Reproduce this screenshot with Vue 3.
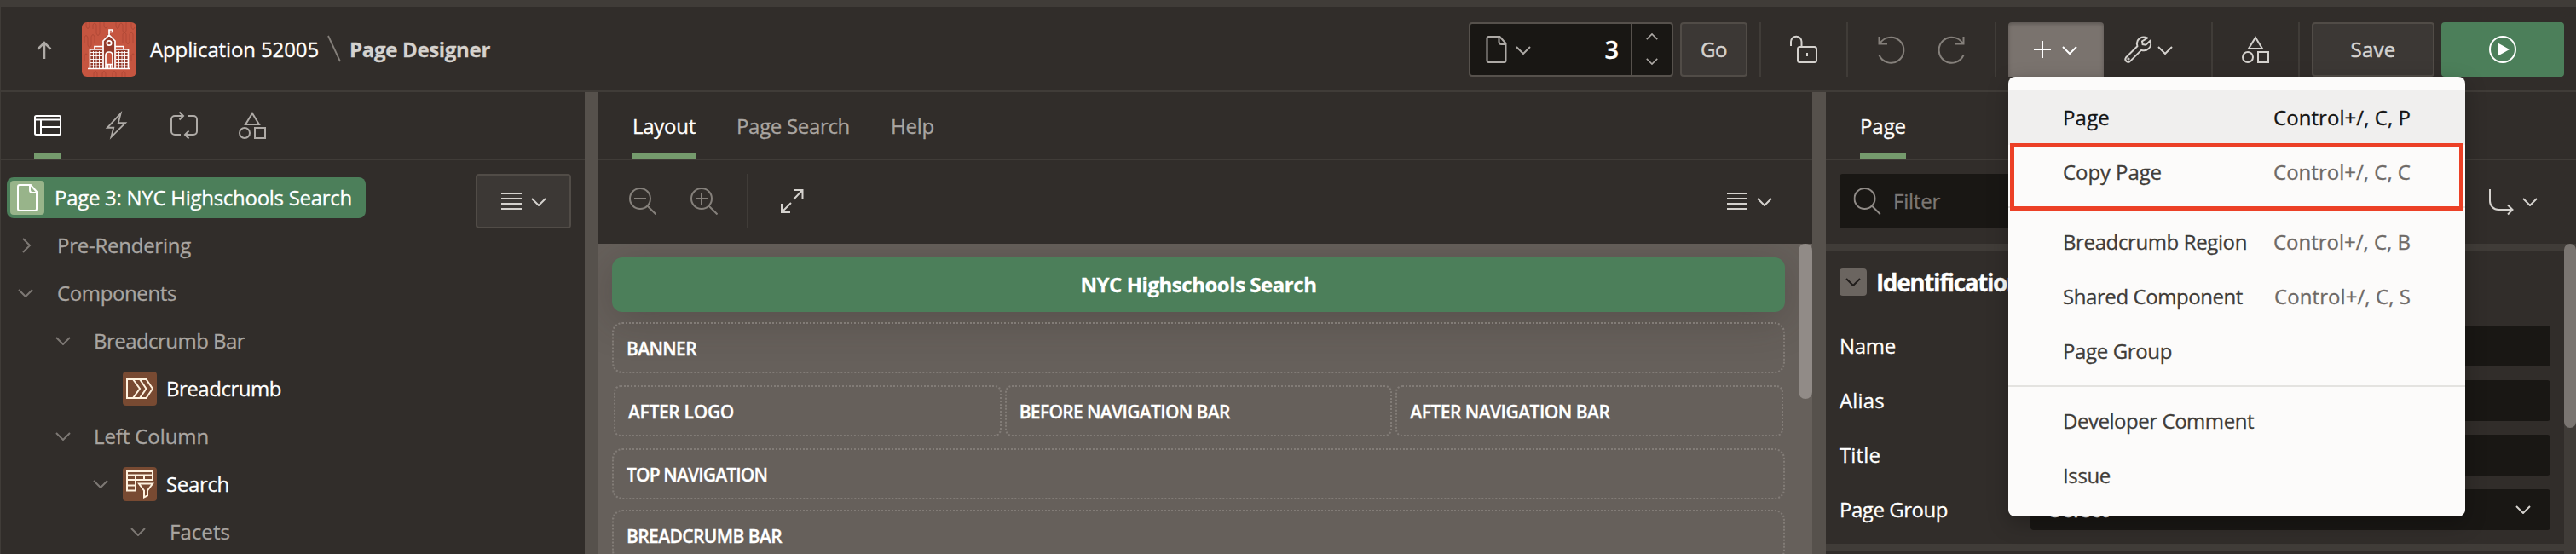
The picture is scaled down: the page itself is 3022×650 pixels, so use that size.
<script setup>
const vFit = {
  mounted(el, { value }) {
    const natural = el.getBoundingClientRect().width
    el.style.letterSpacing = (value - natural) / el.textContent.length + 'px'
  },
}

const tree = [
  { label: 'Pre-Rendering', level: 0, chev: 'right', w: 157 },
  { label: 'Components', level: 0, chev: 'down', w: 140 },
  { label: 'Breadcrumb Bar', level: 1, chev: 'down', w: 177 },
  { label: 'Breadcrumb', level: 2, icon: 'crumb', w: 135 },
  { label: 'Left Column', level: 1, chev: 'down', w: 135 },
  { label: 'Search', level: 2, chev: 'down', icon: 'facet', w: 74 },
  { label: 'Facets', level: 3, chev: 'down', w: 71 },
]
const menu = [
  [
    { label: 'Page', w: 55, key: 'Control+/, C, P', kw: 161, active: true },
    { label: 'Copy Page', w: 116, key: 'Control+/, C, C', kw: 161 },
  ],
  [
    { label: 'Breadcrumb Region', w: 216, key: 'Control+/, C, B', kw: 161 },
    { label: 'Shared Component', w: 211, key: 'Control+/, C, S', kw: 160 },
    { label: 'Page Group', w: 128 },
  ],
  [
    { label: 'Developer Comment', w: 224 },
    { label: 'Issue', w: 56 },
  ],
]
const fields = [
  { label: 'Name', w: 66 },
  { label: 'Alias', w: 53 },
  { label: 'Title', w: 48 },
  { label: 'Page Group', w: 127, select: true },
]
</script>

<template>
  <svg class="defs" width="0" height="0">
    <symbol id="down" viewBox="0 0 18 10"><path d="M1 1l8 8 8-8" /></symbol>
    <symbol id="page" viewBox="0 0 24 32"><path d="M3 1h13l7 8v20a2 2 0 0 1-2 2H3a2 2 0 0 1-2-2V3a2 2 0 0 1 2-2zM15 1v6a3 3 0 0 0 3 3h5" /></symbol>
    <symbol id="lines" viewBox="0 0 24 22"><path d="M0 2h24M0 8h24M0 14h24M0 20h24" /></symbol>
    <symbol id="shapes" viewBox="0 0 32 32"><path d="M16 2l8 13H8zM19 19h12v12H19z" /><circle cx="7" cy="25" r="6" /></symbol>
    <symbol id="search" viewBox="0 0 32 32"><circle cx="13" cy="13" r="12" /><path d="M21.500 21.500L31.500 31.500" /></symbol>
  </svg>
  <div class="app">
    <header class="header">
      <svg class="ico up" width="18" height="22" viewBox="0 0 18 22"><path d="M9 21V2M1.500 9.500L9 2l7.500 7.500" /></svg>
      <svg class="logo" width="64" height="64" viewBox="0 0 64 64">
        <rect width="64" height="64" rx="6" fill="#c65540" />
        <path class="pattern" d="M5 0v5q2 5 4 0V0M13 8V3q2-4 4 0v10q2 5 4 0V0M26 0v5q2 4 4 0M40 0v5q2 5 4 0V3q2-4 4 0v7q2 5 4 0V0M58 0v6q2 5 4 0M3 24v-6q2-5 4 0v9q2 5 4 0V17q2-5 4 0v8M48 24V14q2-4 4 0v9q2 5 4 0v-9q2-4 4 0v10M3 45v-6q2-4 4 0M58 45v-6q2-4 4 0M14 64v-4q2-5 4 0v4M24 64v-4q2-5 4 0v4M36 64v-4q2-5 4 0v4M47 64v-4q2-5 4 0v4" />
        <path fill="#943b2c" d="M25 30v-9l7-8 7 8v34H25zM10 32h14v22H10zM41 32h13v22H41z" />
        <path fill="#c65540" d="M28 54V39q0-4 4-4t4 4v15z" />
        <path class="white" d="M25 54V22l7-7 7 7v32M32 15V9h4v2.500h-4M25 28.500H15V32M39 28.500h10V32M9.500 54V32H24M54.500 54V32H40M28 54V39q0-4 4-4t4 4v15M7 54.500h50M28.500 49.500h7M30.500 50v4M33.500 50v4" />
        <circle class="white" cx="32" cy="24.500" r="2.700" />
        <path class="grid" d="M13.500 34v20M17 34v20M20.500 34v20M10 35.500h14M10 39.500h14M10 43.500h14M10 47.500h14M10 51h14M43.500 34v20M47 34v20M50.500 34v20M40 35.500h14M40 39.500h14M40 43.500h14M40 47.500h14M40 51h14" />
      </svg>
      <span class="crumb-app"><span v-fit="198">Application 52005</span></span>
      <svg class="slash" width="16" height="32" viewBox="0 0 16 32"><path d="M1 1l14 30" /></svg>
      <span class="crumb-page"><span v-fit="165">Page Designer</span></span>
      <div class="tools">
        <div class="page-field">
          <svg class="ico dim pg" width="25" height="32"><use href="#page" /></svg>
          <svg class="ico dim chev" width="18" height="10"><use href="#down" /></svg>
          <span class="num">3</span>
          <div class="spin">
            <svg class="ico dim flip" width="14" height="8"><use href="#down" /></svg>
            <svg class="ico dim" width="14" height="8"><use href="#down" /></svg>
          </div>
        </div>
        <button class="btn go"><span v-fit="31">Go</span></button>
        <i class="vsep s1"></i>
        <svg class="ico lock" width="32" height="32" viewBox="0 0 32 32"><rect x="9" y="13" width="22" height="18" rx="2.500" /><path d="M1 12V7a6 6 0 0 1 12.500 0v6M20 20v4" /></svg>
        <i class="vsep s2"></i>
        <svg class="ico mute undo" width="32" height="32" viewBox="0 0 32 32"><path d="M1.500 1v8.500H11M2.500 9A15 15 0 1 1 1.500 22.500" /></svg>
        <svg class="ico mute redo" width="32" height="32" viewBox="0 0 32 32"><path d="M30.500 1v8.500H21M29.500 9A15 15 0 1 0 30.500 22.500" /></svg>
        <i class="vsep s3"></i>
        <div class="add-wrap">
          <button class="add">
            <svg class="ico" width="20" height="20" viewBox="0 0 20 20"><path d="M10 0v20M0 10h20" /></svg>
            <svg class="ico" width="18" height="10"><use href="#down" /></svg>
          </button>
          <div class="menu">
            <template v-for="(group, g) in menu" :key="g">
              <div v-if="g" class="menu-sep"></div>
              <div v-for="m in group" :key="m.label" class="menu-item" :class="{ active: m.active }">
                <span><span v-fit="m.w">{{ m.label }}</span></span>
                <span v-if="m.key" class="key"><span v-fit="m.kw">{{ m.key }}</span></span>
              </div>
            </template>
            <div class="callout"></div>
          </div>
        </div>
        <svg class="ico wrench" width="32" height="32" viewBox="0 0 32 32"><path d="M27 2.500C23 .5 18 1.500 15.800 5.500c-1.300 2.500-1 4.800-.4 6.700L2 25.500a3.300 3.300 0 0 0 4.600 4.600L20 16.800c3 1 6.200.6 8.700-1.700 2.500-2.400 3-6 1.600-9.100l-5 4.700-3.700-.6-.6-3.600z" /><circle cx="5" cy="27" r=".6" /></svg>
        <svg class="ico wchev" width="18" height="10"><use href="#down" /></svg>
        <i class="vsep s4"></i>
        <svg class="ico shapes" width="32" height="32"><use href="#shapes" /></svg>
        <i class="vsep s5"></i>
        <button class="btn save"><span v-fit="53">Save</span></button>
        <button class="run"><svg class="ico" width="32" height="32" viewBox="0 0 32 32"><circle cx="16" cy="16" r="15" /><path class="solid" d="M10.500 8.500v15L24 16z" /></svg></button>
      </div>
    </header>

    <main class="body">
      <section class="left">
        <nav class="tabs icons">
          <span class="tab on"><svg class="ico" width="32" height="24" viewBox="0 0 32 24"><rect x="1" y="1" width="30" height="22" rx="1.500" /><path d="M1 5.500h30M8 5.500V23M8 14h23" /></svg></span>
          <span class="tab"><svg class="ico" width="24" height="32" viewBox="0 0 26 32"><path d="M19 1L2 19h8L7 31 25 13h-9z" /></svg></span>
          <span class="tab"><svg class="ico" width="32" height="32" viewBox="0 0 32 32"><path d="M12 27H5a4 4 0 0 1-4-4V9a4 4 0 0 1 4-4h10M10.500 0.500L15 5l-4.500 4.500M21 5h6a4 4 0 0 1 4 4v14a4 4 0 0 1-4 4H17M21.500 22.500L17 27l4.500 4.500" /></svg></span>
          <span class="tab"><svg class="ico" width="32" height="32"><use href="#shapes" /></svg></span>
        </nav>
        <div class="tree-area">
          <div class="tree">
            <div class="selected">
              <span class="tile green"><svg class="ico" width="24" height="32"><use href="#page" /></svg></span>
              <span class="sel-text"><span v-fit="349">Page 3: NYC Highschools Search</span></span>
            </div>
            <div v-for="n in tree" :key="n.label" class="node" :class="'l' + n.level">
              <span class="tw">
                <svg v-if="n.chev === 'down'" class="ico" width="18" height="10"><use href="#down" /></svg>
                <svg v-if="n.chev === 'right'" class="ico closed" width="10" height="18" viewBox="0 0 10 18"><path d="M1 1l8 8-8 8" /></svg>
              </span>
              <span v-if="n.icon" class="tile brown">
                <svg v-if="n.icon === 'crumb'" class="ico" width="32" height="24" viewBox="0 0 32 24"><path d="M8 1H1v22h7l8-11zM8 1h8l7.500 11L16 23H8M16 1h7.500L31 12l-7.500 11H16" /></svg>
                <svg v-else class="ico" width="32" height="32" viewBox="0 0 32 32"><path d="M1 1h30v10H1zM1 5.500h30M11 5.500V23.500M21 5.500V11M1 11v12.500h10M1 17.500h10M15 15.500h16l-6 8v6l-4 2v-8z" /></svg>
              </span>
              <span class="ntext" :class="{ strong: n.icon }"><span v-fit="n.w">{{ n.label }}</span></span>
            </div>
          </div>
          <button class="btn list">
            <svg class="ico" width="24" height="22"><use href="#lines" /></svg>
            <svg class="ico" width="18" height="10"><use href="#down" /></svg>
          </button>
        </div>
      </section>

      <section class="center">
        <nav class="tabs">
          <span class="tab on"><span v-fit="74">Layout</span></span>
          <span class="tab"><span v-fit="133">Page Search</span></span>
          <span class="tab"><span v-fit="51">Help</span></span>
        </nav>
        <div class="bar">
          <svg class="ico mute" width="32" height="32" viewBox="0 0 32 32"><use href="#search" /><path d="M6 13h14" /></svg>
          <svg class="ico mute zin" width="32" height="32" viewBox="0 0 32 32"><use href="#search" /><path d="M6 13h14M13 6v14" /></svg>
          <i class="vsep"></i>
          <svg class="ico expand" width="28" height="30" viewBox="0 0 28 30"><path d="M17 2h9.500v10M26 2.500L16 13M2 18v10h10M2 28l11-11" /></svg>
          <svg class="ico lines" width="24" height="22"><use href="#lines" /></svg>
          <svg class="ico" width="18" height="10"><use href="#down" /></svg>
        </div>
        <div class="canvas">
          <div class="title"><span v-fit="277">NYC Highschools Search</span></div>
          <div class="slot"><span v-fit="82">BANNER</span></div>
          <div class="cols">
            <div class="slot"><span v-fit="124">AFTER LOGO</span></div>
            <div class="slot"><span v-fit="247">BEFORE NAVIGATION BAR</span></div>
            <div class="slot"><span v-fit="234">AFTER NAVIGATION BAR</span></div>
          </div>
          <div class="slot"><span v-fit="165">TOP NAVIGATION</span></div>
          <div class="slot last"><span v-fit="182">BREADCRUMB BAR</span></div>
          <div class="thumb"></div>
        </div>
      </section>

      <section class="right">
        <nav class="tabs"><span class="tab on"><span v-fit="54">Page</span></span></nav>
        <div class="filter-row">
          <div class="filter"><svg class="ico" width="33" height="32" viewBox="0 0 32 32"><use href="#search" /></svg><span><span v-fit="55">Filter</span></span></div>
          <svg class="ico goto" width="30" height="31" viewBox="0 0 30 31"><path d="M1 0v14a10 10 0 0 0 10 10h16M22 18.500l5.500 5.500-5.500 5.500" /></svg>
          <svg class="ico" width="18" height="10"><use href="#down" /></svg>
        </div>
        <div class="props">
          <div class="props-main">
            <div class="group">
              <span class="box"><svg class="ico" width="18" height="10"><use href="#down" /></svg></span>
              <span><span v-fit="170">Identification</span></span>
            </div>
            <div v-for="f in fields" :key="f.label" class="field">
              <label><span v-fit="f.w">{{ f.label }}</span></label>
              <div class="input">
                <template v-if="f.select">Select<svg class="ico" width="18" height="10"><use href="#down" /></svg></template>
              </div>
            </div>
            <div class="band"></div>
          </div>
          <div class="track"><div class="thumb-r"></div></div>
        </div>
      </section>
    </main>
  </div>
</template>

<style>
body { margin: 0; overflow: hidden; background: #312d2a; }
</style>

<style scoped>
* { box-sizing: border-box; }
.defs { position: absolute; }
.app {
  width: 3022px; height: 650px; overflow: hidden; background: #312d2a; border-left: 1px solid #403c38;
  font: 500 24px/32px "Open Sans", "Noto Sans", sans-serif; color: #fff; white-space: nowrap;
  -webkit-text-stroke: .3px currentColor;
  display: flex; flex-direction: column;
}
svg { display: block; flex: none; overflow: visible; }
.ico { fill: none; stroke: #d5d2ce; stroke-width: 2; color: inherit; }
.ico .solid { fill: #fff; stroke: none; }
.dim { stroke: #aeaaa6; }
.mute { stroke: #85807b; }
button { font: inherit; padding: 0; margin: 0; }

.header { height: 108px; flex: none; border-top: 8px solid #403c38; border-bottom: 2px solid #403c38; display: flex; align-items: flex-start; padding: 18px 14px 0 42px; }
.header > *, .tools > * { align-self: flex-start; }
.up { margin-top: 22px; stroke: #aeaaa6; stroke-width: 2.500; }
.logo { margin-left: 35px; }
.pattern { fill: none; stroke: #b04936; stroke-width: 1; }
.white { fill: none; stroke: #fff; stroke-width: 1.700; }
.grid { stroke: #fff; stroke-width: .9; fill: none; }
.crumb-app { width: 198px; margin: 16px 0 0 16px; }
.slash { margin: 15px 0 0 10px; stroke: #85807b; stroke-width: 1.800; fill: none; }
.crumb-page { margin: 16px 0 0 10px; font-weight: 700; color: #d5d2ce; }
.tools { display: flex; margin-left: auto; height: 64px; }
.page-field { width: 240px; height: 64px; border: 2px solid #56514c; border-radius: 4px; background: #191714; display: flex; align-items: center; padding-left: 18px; }
.page-field .chev { margin: 2px 0 0 10px; }
.num { margin-left: auto; padding-right: 14px; font-size: 29px; font-weight: 600; }
.spin { width: 48px; height: 60px; border-left: 2px solid #56514c; display: flex; flex-direction: column; justify-content: space-between; align-items: center; padding: 11px 0 12px; }
.flip { transform: rotate(180deg); }
.btn { background: #3c3835; border: 2px solid #514c47; border-radius: 4px; height: 64px; color: #d5d2ce; font-weight: 500; display: flex; align-items: center; justify-content: center; -webkit-text-stroke: .5px currentColor; }
.go { width: 79px; margin-left: 8px; }
.vsep { width: 2px; height: 64px; background: #403c38; flex: none; }
.s1 { margin-left: 14px; }
.lock { margin: 16px 0 0 34px; }
.s2 { margin-left: 34px; }
.undo { margin: 16px 0 0 35px; }
.redo { margin: 16px 0 0 38px; }
.s3 { margin-left: 35px; }
.add-wrap { position: relative; margin-left: 14px; width: 112px; height: 64px; }
.add { width: 112px; height: 64px; border: 0; border-radius: 4px 4px 0 0; background: #7a736e; box-shadow: inset 0 2px 4px rgba(0,0,0,.25); display: flex; align-items: center; padding-left: 30px; gap: 13px; }
.add .ico { stroke: #fff; }
.add .ico + .ico { margin-top: 2px; }
.menu { position: absolute; z-index: 5; left: 0; top: 64px; width: 536px; height: 516px; background: #fcfbfa; border-radius: 8px; padding: 16px 0; box-shadow: 0 8px 24px rgba(0,0,0,.25); color: #403c38; }
.menu-item { height: 64px; display: flex; align-items: center; justify-content: space-between; padding: 0 64px; }
.menu-item.active { background: #f0efee; color: #161513; }
.key { color: #6f6a66; }
.active .key { color: #161513; }
.menu-sep { height: 2px; margin: 8px 0; background: #e4e3e0; }
.callout { position: absolute; left: 2px; top: 78px; width: 532px; height: 79px; border: 5px solid #ec4026; }
.wrench { margin: 16px 0 0 24px; }
.wchev { margin: 28px 0 0 7px; }
.s4 { margin-left: 45px; }
.shapes { margin: 16px 0 0 34px; }
.s5 { margin-left: 34px; }
.save { width: 144px; margin-left: 14px; }
.run { width: 144px; height: 64px; margin-left: 8px; border: 0; border-radius: 4px; background: #4c7f5a; display: flex; align-items: center; justify-content: center; }
.run .ico { stroke: #fff; }

.body { flex: 1; display: flex; min-height: 0; margin-left: -1px; }
.left { width: 686px; flex: none; border-left: 1px solid #403c38; }
.center { width: 1456px; flex: none; border: solid #56514c; border-width: 0 16px; }
.right { flex: 1; min-width: 0; }
.tabs { height: 80px; border-bottom: 2px solid #403c38; display: flex; padding-left: 40px; gap: 48px; color: #a9a5a1; }
.tab { height: 78px; display: flex; align-items: center; padding: 7px 0 0; border-bottom: 6px solid transparent; }
.tab.on { color: #fff; border-color: #759b6d; }
.icons { gap: 0; padding-left: 39px; }
.icons .tab { padding-top: 6px; margin-right: 52px; }
.icons .tab:nth-child(3) { margin-right: 48px; }
.icons .tab:nth-child(2) { margin-right: 52px; }
.icons .tab .ico { stroke: #aeaaa6; }
.icons .tab.on .ico { stroke: #fff; }
.tree-area { display: flex; justify-content: space-between; align-items: flex-start; padding: 16px 16px 0 7px; height: 462px; }
.selected { height: 48px; margin: 4px 0; width: 421px; background: #4c7f5a; border-radius: 8px; display: flex; align-items: center; padding-left: 4px; }
.tile { width: 40px; height: 40px; border-radius: 4px; display: flex; align-items: center; justify-content: center; }
.green { background: #98b48a; }
.green .ico { stroke: #fff; }
.brown { background: #784a32; margin-right: 11px; }
.node .brown .ico { stroke: #fff3e0; }
.sel-text { margin-left: 12px; }
.node { height: 56px; display: flex; align-items: center; }
.l0 { padding-left: 7px; } .l1 { padding-left: 51px; } .l2 { padding-left: 95px; } .l3 { padding-left: 139px; }
.tw { width: 41px; height: 20px; padding: 1px 6px; display: flex; align-items: center; }
.tw .ico { stroke: #7d7874; }
.tw .closed { margin-left: 5px; }
.l0 .tw, .l1 .tw, .l3 .tw { width: 52px; }
.l1 .tw { width: 51px; }
.ntext { color: #a9a5a1; }
.ntext.strong { color: #fff; }
.list { width: 112px; gap: 11px; }
.list .ico + .ico { margin-top: 2px; }

.bar { height: 98px; display: flex; align-items: center; padding: 0 47px 2px 36px; }
.zin { margin-left: 40px; }
.bar .vsep { margin-left: 34px; }
.expand { margin-left: 37px; }
.lines { margin-left: auto; margin-right: 11px; }
.lines + .ico { margin-top: 2px; }
.canvas { position: relative; height: 364px; background: #66605b; padding: 16px 32px 0 16px; overflow: hidden; }
.title { height: 64px; border-radius: 12px; background: #4c7f5a; display: flex; align-items: center; justify-content: center; font-weight: 700; box-shadow: 0 8px 48px rgba(50,40,35,.3); margin-bottom: 12px; }
.slot { position: relative; height: 60px; border: 2px dotted #827c77; border-radius: 12px; display: flex; align-items: center; padding-left: 15px; font-size: 21px; font-weight: 600; padding-top: 1px; }
.cols { display: grid; grid-template-columns: 1fr 1fr 1fr; gap: 4px; margin: 14px 2px; }
.cols .slot { border-radius: 8px; }
.last { margin-top: 12px; }
.thumb { position: absolute; right: 0; top: 0; width: 16px; height: 182px; border-radius: 8px; background: #918b87; }

.filter-row { height: 98px; display: flex; align-items: center; padding: 0 45px 2px 16px; }
.filter { width: 680px; height: 64px; border-radius: 4px; background: #191714; display: flex; align-items: center; padding-left: 16px; color: #7d7874; gap: 14px; }
.filter .ico { stroke: #8f8a86; }
.goto { margin: 3px 9px 0 auto; }
.goto + .ico { margin-top: 2px; }
.props { height: 364px; display: flex; }
.props-main { flex: 1; border-top: 8px solid #403c38; padding: 0; }
.group { height: 80px; display: flex; align-items: center; padding: 0 0 6px 16px; margin-bottom: 4px; font-size: 28px; font-weight: 700; gap: 11px; }
.box { width: 32px; height: 32px; border-radius: 4px; background: #6b6560; display: flex; align-items: center; justify-content: center; }
.box .ico { stroke: #201d1b; }
.field { height: 64px; padding: 4px 16px 0; display: flex; }
.field label { width: 224px; padding-top: 8px; }
.input { flex: 1; height: 48px; border-radius: 4px; background: #191714; display: flex; align-items: center; justify-content: space-between; padding: 0 23px; font-weight: 600; }
.band { height: 12px; border-top: 8px solid #403c38; margin-top: 4px; }
.track { width: 14px; background: #403c38; }
.thumb-r { height: 216px; background: #7a7571; border-radius: 8px; }
</style>
